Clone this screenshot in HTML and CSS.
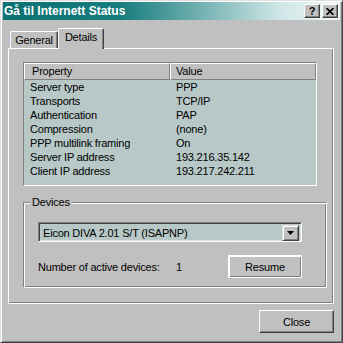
FILE: index.html
```html
<!DOCTYPE html>
<html lang="no">
<head>
  <meta charset="UTF-8" />
  <title>Gå til Internett Status</title>
  <link rel="stylesheet" href="styles.css">
</head>
<body>
  <div class="window">
    <div class="titlebar">
      <span class="title">Gå til Internett Status</span>
      <div class="caption-buttons">
        <span class="cap-btn help">?</span>
        <span class="cap-btn">
          <svg width="8" height="7" viewBox="0 0 8 7">
            <path d="M0.5 0 L7.5 7 M7.5 0 L0.5 7" stroke="#000" stroke-width="1.7" fill="none" />
          </svg>
        </span>
      </div>
    </div>

    <div class="client">
      <div class="tabs">
        <div class="tab">General</div>
        <div class="tab active">Details</div>
      </div>

      <div class="panel">
        <div class="listview">
          <div class="lv-header">
            <div class="hcell prop">Property</div>
            <div class="hcell val">Value</div>
          </div>
          <div class="lv-row"><span class="cell prop">Server type</span><span class="cell val">PPP</span></div>
          <div class="lv-row"><span class="cell prop">Transports</span><span class="cell val">TCP/IP</span></div>
          <div class="lv-row"><span class="cell prop">Authentication</span><span class="cell val">PAP</span></div>
          <div class="lv-row"><span class="cell prop">Compression</span><span class="cell val">(none)</span></div>
          <div class="lv-row"><span class="cell prop">PPP multilink framing</span><span class="cell val">On</span></div>
          <div class="lv-row"><span class="cell prop">Server IP address</span><span class="cell val">193.216.35.142</span></div>
          <div class="lv-row"><span class="cell prop">Client IP address</span><span class="cell val">193.217.242.211</span></div>
        </div>

        <div class="group">
          <div class="group-title">Devices</div>
          <div class="combo">
            <span class="combo-text">Eicon DIVA 2.01 S/T (ISAPNP)</span>
            <span class="combo-btn">
              <svg width="7" height="4" viewBox="0 0 7 4"><path d="M0 0 H7 L3.5 4 Z" fill="#000" /></svg>
            </span>
          </div>
          <div class="device-row">
            <span class="count-label">Number of active devices:</span>
            <span class="count">1</span>
            <span class="btn resume">Resume</span>
          </div>
        </div>
      </div>

      <div class="footer">
        <span class="btn">Close</span>
      </div>
    </div>
  </div>
</body>
</html>
```

FILE: styles.css
```css
body {
  margin: 0;
  font-family: "Liberation Sans", Arial, sans-serif;
  font-size: 11px;
  letter-spacing: -0.2px;
  color: #000;
  background: #c0c0c0;
}
.window {
  box-sizing: border-box;
  width: 343px;
  height: 343px;
  padding: 1px 2px 0 2px;
  background: #c0c0c0;
  border: 1px solid;
  border-color: #dfdfdf #404040 #404040 #dfdfdf;
  box-shadow: inset 1px 1px #fff, inset -1px -1px #808080;
}
.titlebar {
  height: 18px;
  display: flex;
  align-items: center;
  justify-content: space-between;
  padding: 0 2px 0 1px;
  background: linear-gradient(to right, #0d7272 0%, #177c7d 35%, #cfe6e6 82%, #f2f8f8 100%);
}
.title {
  color: #fff;
  font-weight: bold;
  font-size: 12px;
  letter-spacing: 0;
}
.caption-buttons {
  display: flex;
  gap: 2px;
}
.cap-btn {
  box-sizing: border-box;
  width: 16px;
  height: 14px;
  display: flex;
  align-items: center;
  justify-content: center;
  background: #c0c0c0;
  border: 1px solid;
  border-color: #fff #404040 #404040 #fff;
  box-shadow: inset -1px -1px #808080;
}
.cap-btn.help {
  font-weight: bold;
  font-size: 11px;
  line-height: 12px;
}
.client {
  padding: 8px 0 0 5px;
}
.tabs {
  display: flex;
  align-items: flex-end;
  height: 20px;
  padding-left: 2px;
}
.tab {
  box-sizing: border-box;
  height: 17px;
  width: 48px;
  text-align: center;
  line-height: 16px;
  border: 1px solid;
  border-bottom: none;
  border-color: #fff #404040 transparent #fff;
  border-radius: 2px 2px 0 0;
  box-shadow: inset -1px 0 #808080;
}
.tab.active {
  position: relative;
  z-index: 1;
  width: 46px;
  height: 21px;
  margin-bottom: -1px;
  line-height: 17px;
  background: #c0c0c0;
}
.panel {
  box-sizing: border-box;
  width: 326px;
  height: 256px;
  padding: 13px 0 0 14px;
  border: 1px solid #fff;
  box-shadow: inset -1px -1px #808080;
}
.listview {
  box-sizing: border-box;
  width: 294px;
  height: 124px;
  background: #b7c8c7;
  border: 1px solid;
  border-color: #808080 #fff #fff #808080;
}
.lv-header {
  display: flex;
  height: 17px;
}
.hcell {
  box-sizing: border-box;
  width: 146px;
  line-height: 15px;
  background: #c0c0c0;
  border: 1px solid;
  border-color: #fff #808080 #808080 #fff;
}
.hcell.prop {
  padding-left: 7px;
}
.hcell.val {
  padding-left: 5px;
}
.lv-row {
  display: flex;
  height: 14px;
  line-height: 14px;
}
.cell {
  width: 146px;
  padding-left: 6px;
  box-sizing: border-box;
  white-space: nowrap;
}
.group {
  box-sizing: border-box;
  width: 304px;
  margin-top: 16px;
  padding: 0 24px 9px 14px;
  border: 1px solid;
  border-color: #808080 #fff #fff #808080;
  box-shadow: inset 1px 1px #fff, inset -1px -1px #808080;
}
.group-title {
  display: table;
  margin: -7px 0 0 -8px;
  padding: 0 2px;
  line-height: 13px;
  background: #c0c0c0;
}
.combo {
  box-sizing: border-box;
  display: flex;
  height: 20px;
  margin-top: 13px;
  padding: 2px;
  background: #b7c8c7;
  border: 1px solid;
  border-color: #808080 #fff #fff #808080;
  box-shadow: inset 1px 1px #404040, inset -1px -1px #dfdfdf;
}
.combo-text {
  flex: 1;
  padding-left: 2px;
  line-height: 16px;
}
.combo-btn {
  box-sizing: border-box;
  width: 17px;
  height: 16px;
  display: flex;
  align-items: center;
  justify-content: center;
  background: #c0c0c0;
  border: 1px solid;
  border-color: #dfdfdf #404040 #404040 #dfdfdf;
  box-shadow: inset 1px 1px #fff, inset -1px -1px #808080;
}
.device-row {
  display: flex;
  align-items: center;
  height: 23px;
  margin-top: 13px;
}
.count-label {
  width: 138px;
}
.btn {
  box-sizing: border-box;
  width: 75px;
  height: 23px;
  display: flex;
  align-items: center;
  justify-content: center;
  background: #c0c0c0;
  border: 1px solid;
  border-color: #fff #404040 #404040 #fff;
  box-shadow: inset -1px -1px #808080;
}
.btn.resume {
  width: 74px;
  margin-left: auto;
  border-color: #fff;
  box-shadow: inset 1px 1px #fff, inset -1px -1px #808080;
}
.footer {
  display: flex;
  justify-content: flex-end;
  width: 326px;
  margin-top: 6px;
}
```
